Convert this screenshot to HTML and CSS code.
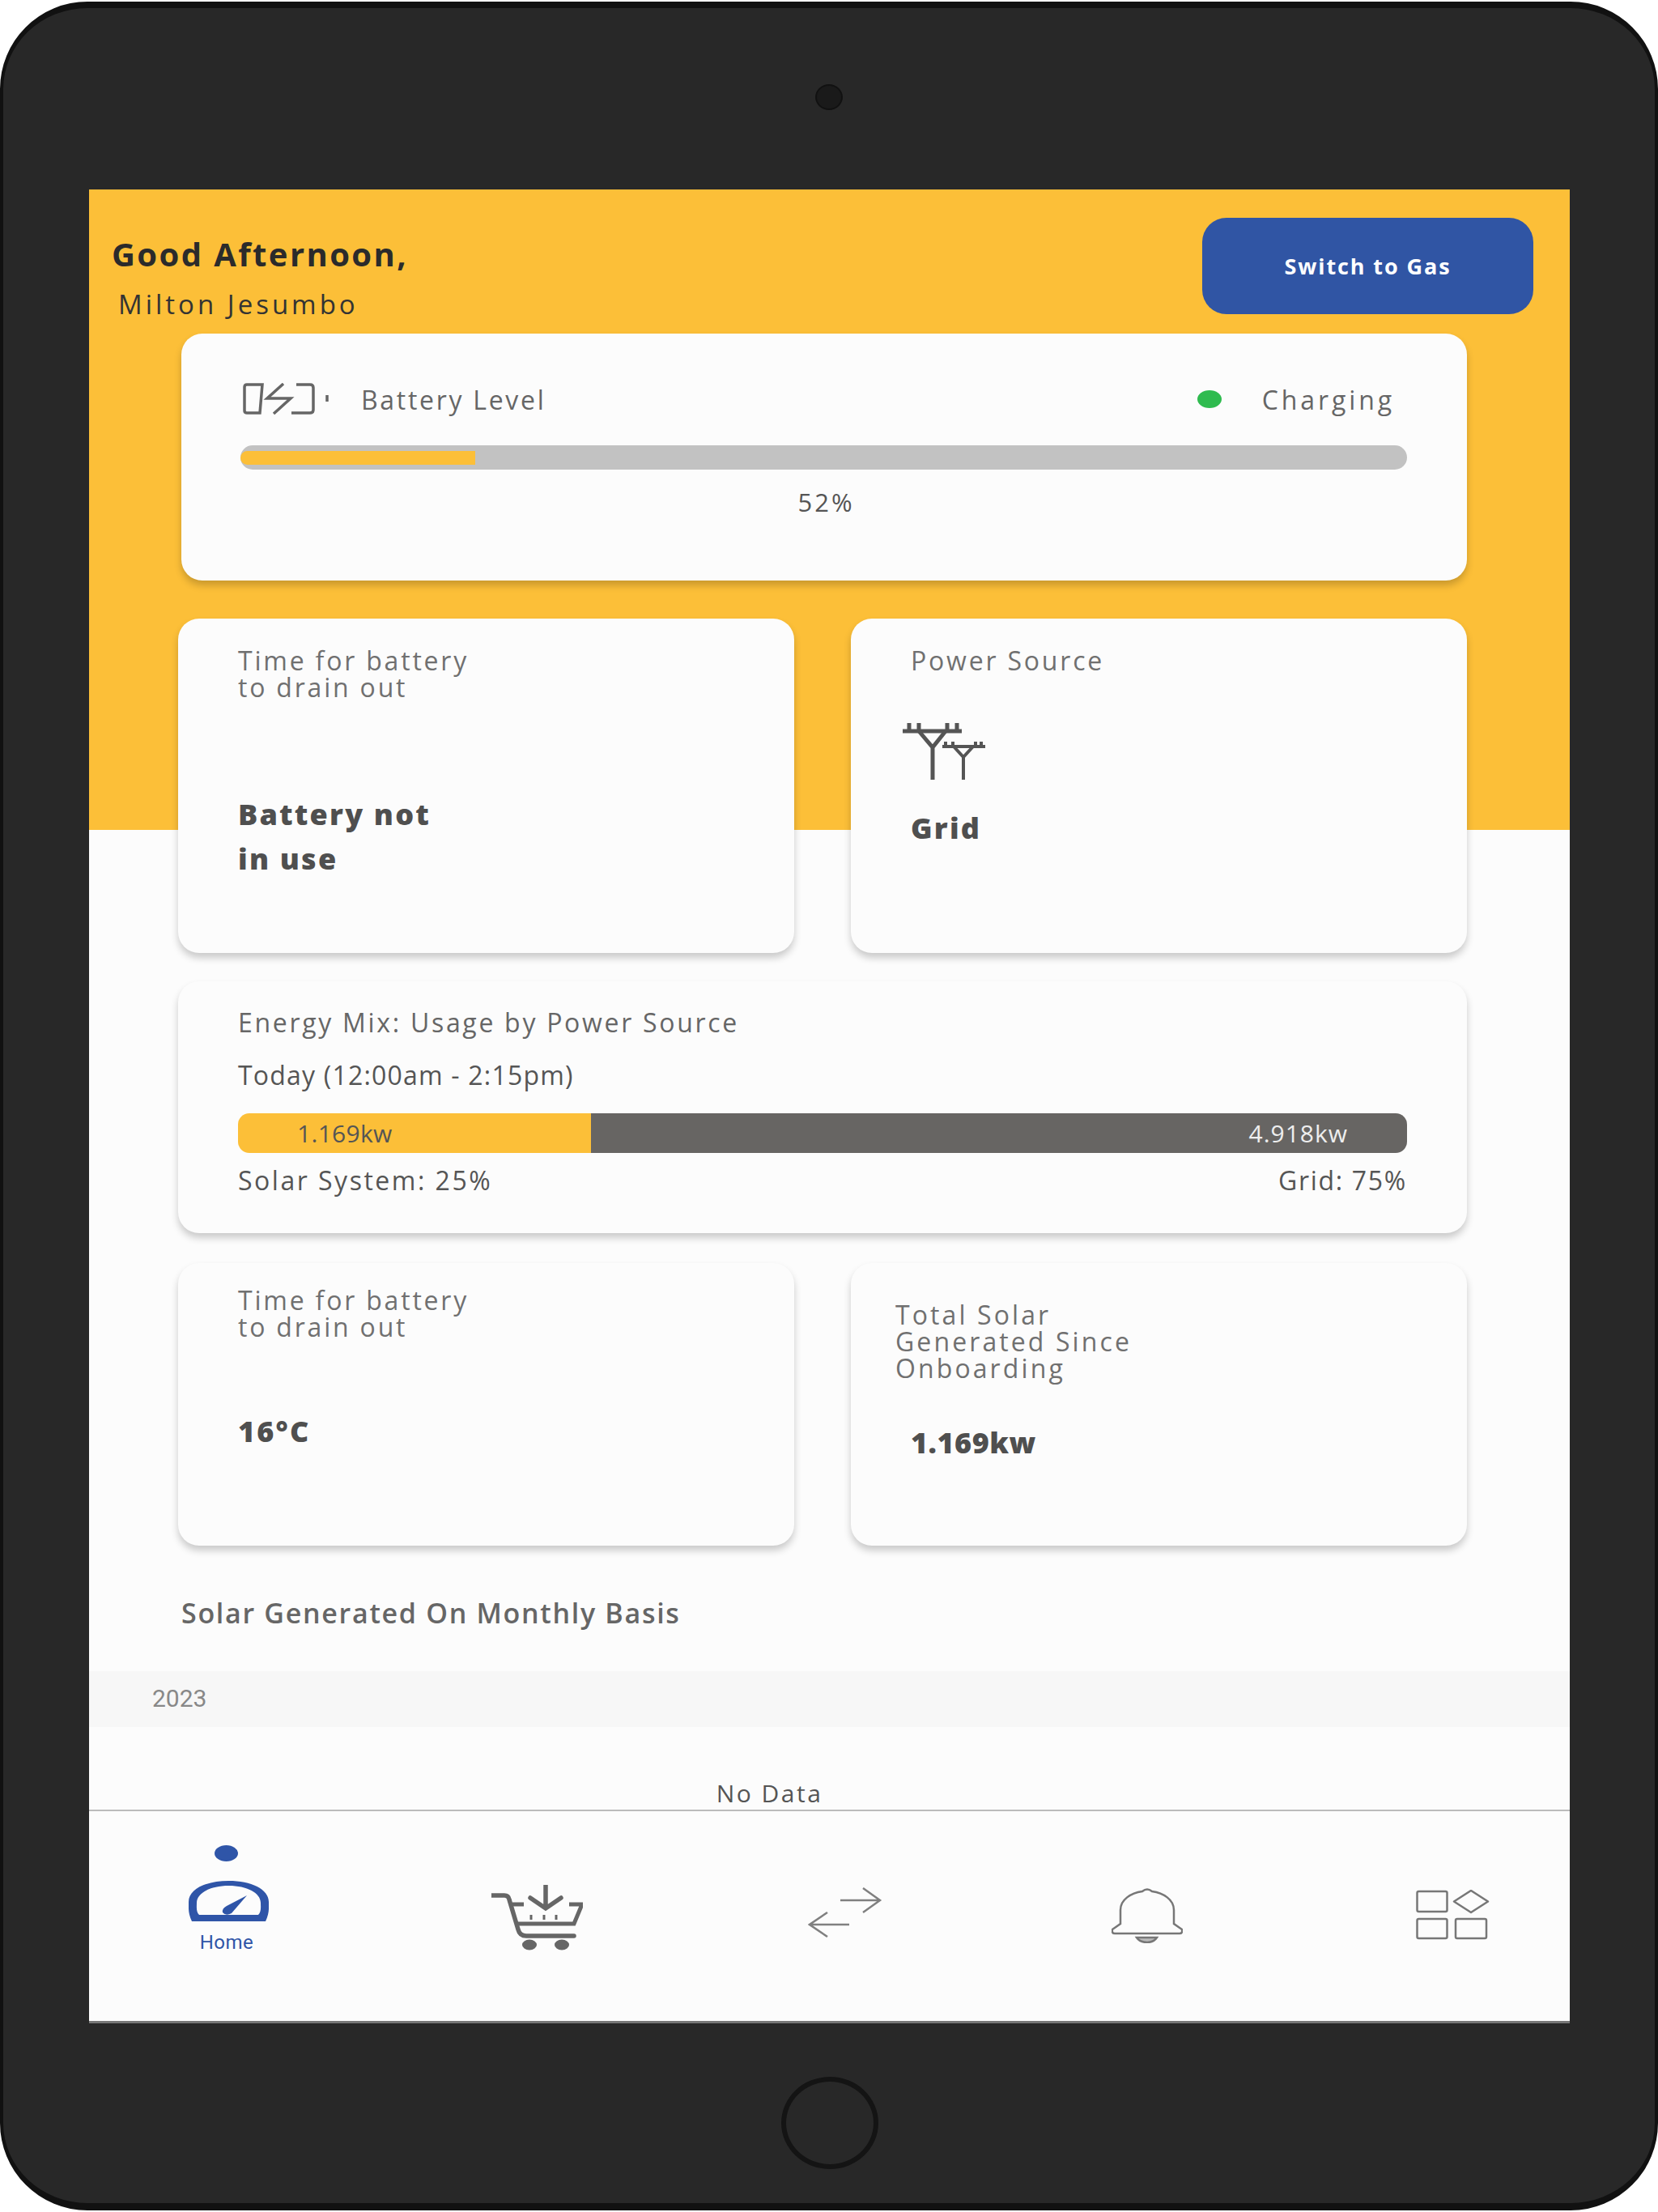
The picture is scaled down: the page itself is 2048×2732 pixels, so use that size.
FILE: index.html
```html
<!DOCTYPE html>
<html lang="en">
<head>
    <meta charset="UTF-8">
    <title>Solar Dashboard</title>
    <link rel="stylesheet" href="styles.css">
</head>
<body>
    <div class="device">
        <div class="bezel-top"><div class="camera"></div></div>

        <div class="screen">
            <div class="header">
                <div class="greeting">
                    <div class="greeting-title">Good Afternoon,</div>
                    <div class="greeting-name">Milton Jesumbo</div>
                </div>
                <button class="switch-btn">Switch to Gas</button>
            </div>

            <div class="content">
                <div class="card battery-card">
                    <div class="battery-row">
                        <svg class="battery-icon" width="110" height="40" viewBox="0 0 110 40" fill="none" stroke="#666" stroke-width="3.5">
                            <path d="M24 2H5Q2 2 2 5V34Q2 37 5 37H21Z"/>
                            <path d="M50 1L30 19H59L38 38"/>
                            <path d="M66 2H83Q87 2 87 6V33Q87 37 83 37H60"/>
                            <path d="M104 15V23"/>
                        </svg>
                        <span class="battery-label">Battery Level</span>
                        <span class="status-dot"></span>
                        <span class="status-label">Charging</span>
                    </div>
                    <div class="battery-track"><div class="battery-fill"></div></div>
                    <div class="battery-percent">52%</div>
                </div>

                <div class="card-row row-status">
                    <div class="card stat-card">
                        <div class="card-title">Time for battery<br>to drain out</div>
                        <div class="card-value value-drain">Battery not<br>in use</div>
                    </div>
                    <div class="card stat-card">
                        <div class="card-title">Power Source</div>
                        <svg class="pylon-icon" width="102" height="70" viewBox="75 143 102 70" fill="none" stroke="#555">
                            <g stroke-width="5">
                                <path d="M75 153H148M83 143V153M95 143V153M130 143V153M142 143V153"/>
                                <path d="M95 153L112 173L128 153M112 173V213"/>
                            </g>
                            <g stroke-width="4">
                                <path d="M124 172H177M128 166V172M137 166V172M165 166V172M172 166V172"/>
                                <path d="M138 172L150 185L162 172M150 185V213"/>
                            </g>
                        </svg>
                        <div class="card-value value-grid">Grid</div>
                    </div>
                </div>

                <div class="card energy-card">
                    <div class="energy-title">Energy Mix: Usage by Power Source</div>
                    <div class="energy-range">Today (12:00am - 2:15pm)</div>
                    <div class="energy-bar">
                        <div class="energy-solar">1.169kw</div>
                        <div class="energy-grid">4.918kw</div>
                    </div>
                    <div class="energy-legend">
                        <span>Solar System: 25%</span>
                        <span class="legend-grid">Grid: 75%</span>
                    </div>
                </div>

                <div class="card-row row-totals">
                    <div class="card stat-card">
                        <div class="card-title title-low">Time for battery<br>to drain out</div>
                        <div class="card-value value-temp">16°C</div>
                    </div>
                    <div class="card stat-card">
                        <div class="card-title title-total">Total Solar<br>Generated Since<br>Onboarding</div>
                        <div class="card-value value-total">1.169kw</div>
                    </div>
                </div>

                <div class="section-title">Solar Generated On Monthly Basis</div>
            </div>

            <div class="year-strip">2023</div>
            <div class="no-data">No Data</div>

            <div class="tabbar">
                <div class="tab tab-home">
                    <span class="tab-dot"></span>
                    <svg width="99" height="52" viewBox="0 0 99 52" fill="#2f55a8">
                        <path fill-rule="evenodd" d="M4 50C-1 40 0 32 0 26C0 10 22 0 49.5 0C77 0 99 10 99 26C99 32 100 40 95 50ZM13 42H86C90 38 89 32 89 27C89 15 72 6 49.5 6C27 6 10 15 10 27C10 32 9 38 13 42Z"/>
                        <path d="M72 18L53 40Q46 44 42 39Q41 34 47 31Z"/>
                    </svg>
                    <span class="tab-label">Home</span>
                </div>
                <div class="tab tab-cart">
                    <svg width="113" height="81" viewBox="0 0 113 81" fill="none" stroke="#666" stroke-width="5.5">
                        <path d="M1 13H16Q21 13 22 18L33 55Q35 63 43 63H102" stroke-linecap="round"/>
                        <path d="M96 24H112L102 48H32M26 24H40" stroke-width="5"/>
                        <path d="M67 0V28M48 16L67 29L86 16" stroke-linecap="round"/>
                        <path d="M49 37V43M65 37V43M80 37V43" stroke-width="3"/>
                        <ellipse cx="47" cy="74" rx="9" ry="6.5" fill="#666" stroke="none"/>
                        <ellipse cx="87" cy="74" rx="9" ry="6.5" fill="#666" stroke="none"/>
                    </svg>
                </div>
                <div class="tab tab-arrows">
                    <svg width="92" height="62" viewBox="0 0 92 62" fill="none" stroke="#808080" stroke-width="2.5">
                        <path d="M40 16H89M68 1L89 16L68 31"/>
                        <path d="M51 46H2M24 31L2 46L24 61"/>
                    </svg>
                </div>
                <div class="tab tab-bell">
                    <svg width="88" height="68" viewBox="0 0 88 68" fill="none" stroke="#777" stroke-width="2.5">
                        <path d="M11 44V27C11 14 24 6 38 4Q44 -1 50 4C64 6 77 14 77 27V44L87 51Q88 56 84 56H4Q0 56 1 51Z"/>
                        <path d="M31 61H56Q52 67 44 67Q35 67 31 61Z" fill="#bbb"/>
                    </svg>
                </div>
                <div class="tab tab-apps">
                    <svg width="91" height="62" viewBox="0 0 91 62" fill="none" stroke="#777" stroke-width="2.5">
                        <rect x="1.5" y="2" width="37" height="25" rx="2"/>
                        <rect x="1.5" y="36" width="37" height="24" rx="2"/>
                        <rect x="49" y="36" width="38" height="24" rx="2"/>
                        <path d="M68 1L89 14.5L68 28L47 14.5Z" stroke-linejoin="round"/>
                    </svg>
                </div>
            </div>
        </div>

        <div class="bezel-bottom"><div class="home-button"></div></div>
    </div>
</body>
</html>
```

FILE: styles.css
```css
body {
    margin: 0;
    background-color: #fff;
    font-family: "Open Sans", Arial, sans-serif;
    color: #666;
}
.device {
    box-sizing: border-box;
    width: 2048px;
    height: 2728px;
    margin-top: 2px;
    padding: 0 105px 0 106px;
    background-color: #282828;
    border-style: solid;
    border-color: #111;
    border-width: 8px 4px 9px 4px;
    border-radius: 108px;
}
.bezel-top {
    height: 224px;
    padding-bottom: 4px;
    box-sizing: border-box;
    display: flex;
    align-items: center;
    justify-content: center;
}
.camera {
    width: 34px;
    height: 32px;
    margin-right: 2px;
    border-radius: 50%;
    background-color: #1a1a1a;
    border: 2px solid #111;
    box-sizing: border-box;
}
.bezel-bottom {
    height: 221px;
    padding-top: 24px;
    box-sizing: border-box;
    display: flex;
    align-items: center;
    justify-content: center;
}
.home-button {
    width: 120px;
    height: 114px;
    box-sizing: border-box;
    border: 6px solid #141414;
    border-radius: 50%;
}
.screen {
    height: 2265px;
    display: flex;
    flex-direction: column;
    background: linear-gradient(#fcbf38 0 791px, #fcfcfc 0);
}
.header {
    height: 178px;
    box-sizing: border-box;
    padding: 35px 45px 0 28px;
    display: flex;
    justify-content: space-between;
    align-items: flex-start;
}
.greeting {
    padding-top: 20px;
}
.greeting-title {
    font-size: 40px;
    line-height: 50px;
    font-weight: 700;
    letter-spacing: 2.4px;
    color: #2b2b2b;
}
.greeting-name {
    margin: 17px 0 0 8px;
    font-size: 33px;
    line-height: 40px;
    letter-spacing: 4px;
    color: #333;
}
.switch-btn {
    width: 409px;
    height: 119px;
    border: none;
    border-radius: 30px;
    background-color: #3055a4;
    color: #fff;
    font-family: "Open Sans", Arial, sans-serif;
    font-size: 27px;
    font-weight: 700;
    letter-spacing: 1.9px;
}
.content {
    padding: 0 127px 0 110px;
}
.card {
    box-sizing: border-box;
    background-color: #fcfcfc;
    border-radius: 26px;
    box-shadow: 0 6px 10px rgba(0, 0, 0, 0.2);
}
.battery-card {
    height: 305px;
    margin-left: 4px;
    padding: 60px 74px 0 73px;
}
.battery-row {
    display: flex;
    align-items: center;
    height: 42px;
    margin-bottom: 36px;
    font-size: 32px;
}
.battery-icon {
    margin-left: 3px;
}
.battery-label {
    margin-left: 36px;
    flex-grow: 1;
    letter-spacing: 2.7px;
}
.status-dot {
    width: 30px;
    height: 22px;
    border-radius: 50%;
    background-color: #2fbb4f;
}
.status-label {
    margin-left: 50px;
    padding-right: 15px;
    letter-spacing: 3.9px;
}
.battery-track {
    display: flex;
    align-items: center;
    height: 30px;
    border-radius: 15px;
    background-color: #c2c2c2;
}
.battery-fill {
    width: 290px;
    height: 17px;
    border-radius: 9px 0 0 9px;
    background-color: #fcbf38;
}
.battery-percent {
    margin: 20px 0 0 6px;
    text-align: center;
    font-size: 31px;
    line-height: 40px;
    letter-spacing: 3px;
    color: #555;
}
.card-row {
    display: grid;
    grid-template-columns: 761px 761px;
    gap: 70px;
}
.row-status {
    margin-top: 47px;
    height: 413px;
}
.row-totals {
    margin-top: 37px;
    height: 349px;
}
.stat-card {
    padding: 35px 74px 0;
}
.card-title {
    font-size: 32px;
    line-height: 33px;
    letter-spacing: 2.8px;
    color: #707070;
}
.title-low {
    margin-top: -6px;
}
.title-total {
    margin: 12px 0 0 -19px;
    letter-spacing: 3.1px;
}
.card-value {
    font-size: 36px;
    line-height: 55px;
    font-weight: 800;
    letter-spacing: 2.2px;
    color: #4f4f4f;
}
.value-drain {
    margin-top: 113px;
}
.value-grid {
    margin-top: 32px;
}
.value-temp {
    margin-top: 85px;
}
.value-total {
    margin-top: 48px;
    letter-spacing: 0.5px;
}
.pylon-icon {
    display: block;
    margin: 61px 0 0 -10px;
}
.energy-card {
    height: 311px;
    margin-top: 35px;
    padding: 31px 74px 0;
    font-size: 32px;
    line-height: 40px;
}
.energy-title {
    letter-spacing: 2.7px;
}
.energy-range {
    margin-top: 25px;
    letter-spacing: 1.2px;
    color: #555;
}
.energy-bar {
    display: flex;
    height: 49px;
    margin-top: 27px;
    border-radius: 14px;
    overflow: hidden;
    font-size: 30px;
    line-height: 49px;
}
.energy-solar {
    width: 436px;
    padding-left: 73px;
    box-sizing: border-box;
    background-color: #fcbf38;
    letter-spacing: 0.3px;
    color: #555;
}
.energy-grid {
    flex-grow: 1;
    padding-right: 73px;
    text-align: right;
    background-color: #676563;
    letter-spacing: 1px;
    color: #eee;
}
.energy-legend {
    display: flex;
    justify-content: space-between;
    margin-top: 14px;
    letter-spacing: 2.5px;
    color: #555;
}
.legend-grid {
    letter-spacing: 1.7px;
}
.section-title {
    margin: 58px 0 47px 4px;
    font-size: 34px;
    line-height: 50px;
    font-weight: 600;
    letter-spacing: 1.7px;
    color: #666;
}
.year-strip {
    height: 69px;
    padding-left: 78px;
    background-color: #f7f7f7;
    font-family: Roboto, Arial, sans-serif;
    font-size: 30px;
    line-height: 67px;
    color: #888;
}
.no-data {
    height: 102px;
    box-sizing: border-box;
    padding: 62px 148px 0 0;
    text-align: center;
    font-size: 30px;
    line-height: 40px;
    letter-spacing: 2.5px;
    color: #555;
}
.tabbar {
    flex-grow: 1;
    display: flex;
    align-items: flex-start;
    padding: 42px 0 0 123px;
    border-top: 2px solid #bbb;
    border-bottom: 3px solid #777;
}
.tab {
    display: flex;
    flex-direction: column;
    align-items: center;
}
.tab-dot {
    width: 29px;
    height: 20px;
    margin: 0 6px 24px 0;
    border-radius: 50%;
    background-color: #2f55a8;
}
.tab-label {
    margin: 10px 5px 0 0;
    font-family: Roboto, Arial, sans-serif;
    font-size: 24px;
    line-height: 28px;
    letter-spacing: 0.5px;
    color: #2f55a8;
}
.tab-cart {
    margin: 49px 0 0 275px;
}
.tab-arrows {
    margin: 52px 0 0 278px;
}
.tab-bell {
    margin: 53px 0 0 283px;
}
.tab-apps {
    margin: 55px 0 0 288px;
}
```
